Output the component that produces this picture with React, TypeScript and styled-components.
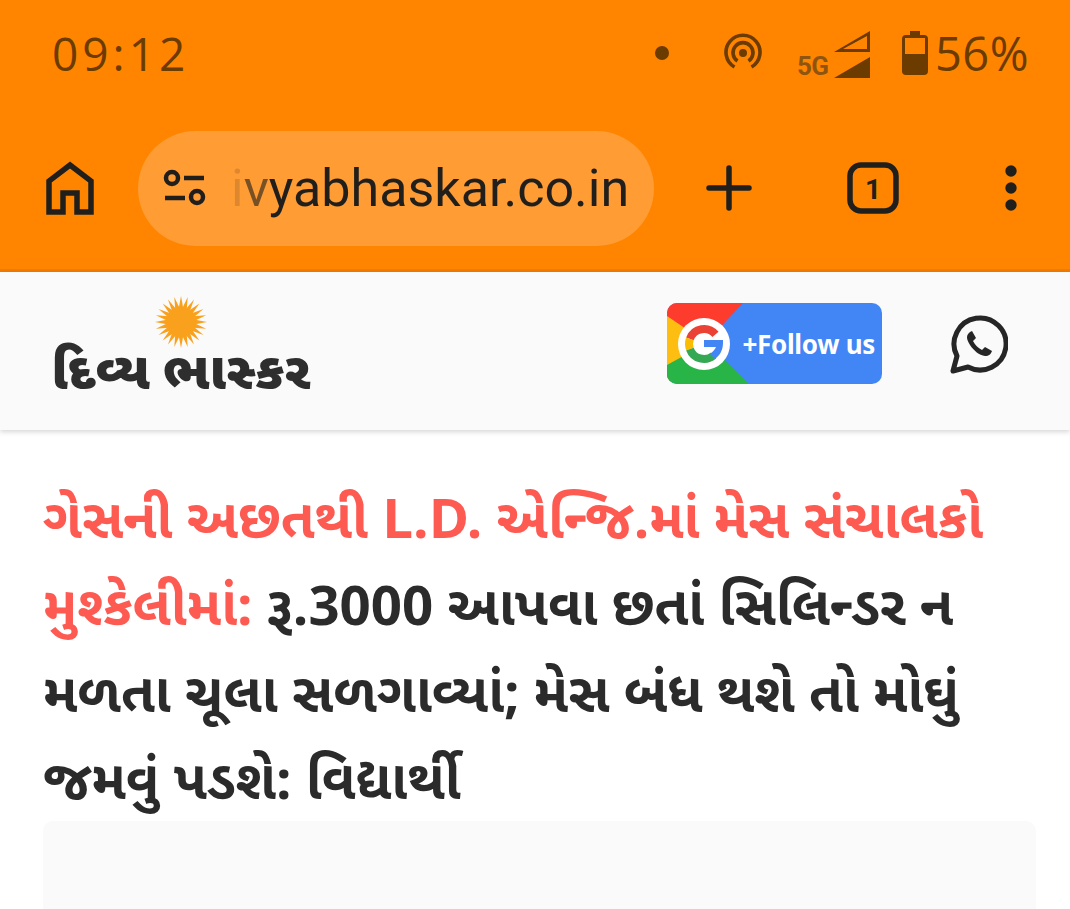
import React from 'react'
import styled, { createGlobalStyle } from 'styled-components'

const GlobalStyle = createGlobalStyle`
  html, body {
    margin: 0;
    padding: 0;
    background: #fff;
  }
`

const Page = styled.div`
  width: 1070px;
  height: 909px;
  overflow: hidden;
  background: #fff;
  font-family: "Roboto", "Noto Sans", sans-serif;
`

const Chrome = styled.div`
  height: 269px;
  background: #ff8500;
  border-bottom: 3px solid #f07c00;
  display: flex;
  flex-direction: column;
`

const StatusBar = styled.div`
  height: 106px;
  padding: 0 41px 0 52px;
  display: flex;
  align-items: center;
  color: #6b3b00;
`

const Clock = styled.span`
  font-family: "Open Sans", sans-serif;
  font-size: 46px;
  letter-spacing: 4px;
  margin-right: auto;
`

const Battery = styled.span`
  font-family: "Open Sans", sans-serif;
  font-size: 47px;
  letter-spacing: 0.5px;
`

const StatusIcon = styled.svg<{ $gap?: number }>`
  display: block;
  flex: none;
  margin-right: ${(p) => p.$gap ?? 0}px;
  fill: #6b3b00;
`

const Signal = styled.div`
  width: 74px;
  height: 52px;
  margin-right: 31px;
  flex: none;
  display: flex;
  justify-content: space-between;
  align-items: flex-end;
`

const NetworkLabel = styled.span`
  font-family: "Roboto", sans-serif;
  font-weight: 700;
  font-size: 26px;
  line-height: 24px;
  letter-spacing: -0.5px;
  margin-bottom: 1px;
  color: #8f5510;
`

const Toolbar = styled.div`
  height: 100px;
  margin-top: 32px;
  display: flex;
  align-items: center;
  padding-left: 46px;
`

const UrlPill = styled.div`
  width: 516px;
  height: 115px;
  margin-left: 44px;
  margin-right: 52px;
  flex: none;
  border-radius: 58px;
  background: #ff9c33;
  display: flex;
  align-items: center;
  padding-left: 25px;
  box-sizing: border-box;
`

const UrlText = styled.span`
  margin-left: 24px;
  font-family: "Roboto", sans-serif;
  font-size: 52px;
  color: #201f1c;
  white-space: nowrap;
`

const FadeLetter = styled.span<{ $alpha: number }>`
  opacity: ${(p) => p.$alpha};
`

const ToolIcon = styled.svg<{ $gap?: number }>`
  display: block;
  flex: none;
  margin-right: ${(p) => p.$gap ?? 0}px;
`

const SiteHeader = styled.header`
  height: 158px;
  background: #fafafa;
  box-shadow: 0 2px 5px rgba(0, 0, 0, 0.16);
  display: flex;
  align-items: center;
  padding: 0 62px 0 50px;
  position: relative;
`

const Logo = styled.div`
  width: 262px;
  margin-top: -9px;
  display: flex;
  flex-direction: column;
  align-items: center;
  margin-right: auto;
`

const LogoText = styled.div`
  margin-top: 4px;
  font-family: "Noto Sans Gujarati", "Noto Sans", sans-serif;
  font-weight: 900;
  font-size: 52px;
  line-height: 46px;
  color: #2e2e2e;
  white-space: nowrap;
`

const FollowBadge = styled.div`
  width: 215px;
  height: 81px;
  margin-right: 66px;
  margin-top: -16px;
  border-radius: 10px;
  overflow: hidden;
  background: #4285f4;
  position: relative;
  display: flex;
  align-items: center;
  justify-content: flex-end;
  padding: 2px 7px 0 0;
  box-sizing: border-box;
`

const FollowArt = styled.svg`
  position: absolute;
  left: 0;
  top: 0;
`

const FollowText = styled.span`
  position: relative;
  font-family: "Noto Sans", sans-serif;
  font-weight: 700;
  font-size: 26px;
  letter-spacing: -0.3px;
  color: #fff;
`

const WhatsApp = styled.svg`
  display: block;
  margin-top: -12px;
`

const Article = styled.main`
  padding: 51px 34px 0 43px;
`

const Headline = styled.h1`
  margin: 0;
  font-family: "Noto Sans Gujarati", "Noto Sans", "Roboto", sans-serif;
  font-size: 54.6px;
  font-weight: 700;
  line-height: 87px;
  color: #2b2b2b;
`

const Slug = styled.span`
  color: #fd5a52;
`

const AdBox = styled.div`
  margin-top: -8px;
  height: 120px;
  border-radius: 10px;
  background: #fafafa;
`

function Sun() {
  const rays = Array.from({ length: 24 }, (_, i) => i * 15)
  return (
    <svg width="54" height="54" viewBox="0 0 54 54">
      <circle cx="27" cy="27" r="14.5" fill="#f9a11d" />
      {rays.map((a) => (
        <polygon key={a} points="24.6,14 29.4,14 27,1" fill="#f9a11d" transform={`rotate(${a} 27 27)`} />
      ))}
    </svg>
  )
}

export default function App() {
  return (
    <Page>
      <GlobalStyle />
      <Chrome>
        <StatusBar>
          <Clock>09:12</Clock>
          <StatusIcon $gap={53} width="16" height="16" viewBox="0 0 16 16">
            <circle cx="8" cy="8" r="7" />
          </StatusIcon>
          <StatusIcon $gap={34} width="40" height="40" viewBox="0 0 40 40">
            <circle cx="20" cy="20" r="4" />
            <path d="M11.5 34a17 17 0 1 1 17 0" fill="none" stroke="#6b3b00" strokeWidth="3.6" />
            <path d="M14.5 28a10 10 0 1 1 11 0" fill="none" stroke="#6b3b00" strokeWidth="3.6" />
          </StatusIcon>
          <Signal>
            <NetworkLabel>5G</NetworkLabel>
            <StatusIcon width="37" height="52" viewBox="0 0 37 52">
              <path d="M0 25 36 4v21Z M9 22h24V9Z" fillRule="evenodd" />
              <path d="M0 51 36 30v21Z" />
            </StatusIcon>
          </Signal>
          <StatusIcon $gap={7} width="26" height="44" viewBox="0 0 26 44">
            <path d="M8 0h10v4h4a4 4 0 0 1 4 4v32a4 4 0 0 1-4 4H4a4 4 0 0 1-4-4V8a4 4 0 0 1 4-4h4Z M3 7v16h20V7Z" fillRule="evenodd" />
          </StatusIcon>
          <Battery>56%</Battery>
        </StatusBar>
        <Toolbar>
          <ToolIcon width="48" height="54" viewBox="0 0 48 54" fill="none" stroke="#201f1c" strokeWidth="5.5">
            <path d="M3 51V20L24 4l21 16v31H31V32H17v19Z" />
          </ToolIcon>
          <UrlPill>
            <ToolIcon width="44" height="38" viewBox="0 0 44 38" fill="none" stroke="#201f1c" strokeWidth="4.5">
              <circle cx="9" cy="9" r="6" />
              <path d="M21 9h20M2 29h20" />
              <circle cx="34" cy="28" r="6" />
            </ToolIcon>
            <UrlText>
              <FadeLetter $alpha={0.15}>i</FadeLetter>
              <FadeLetter $alpha={0.6}>v</FadeLetter>
              yabhaskar.co.in
            </UrlText>
          </UrlPill>
          <ToolIcon $gap={95} width="46" height="46" viewBox="0 0 46 46" stroke="#201f1c" strokeWidth="5.5" strokeLinecap="round">
            <path d="M3 23h40M23 3v40" />
          </ToolIcon>
          <ToolIcon $gap={106} width="52" height="52" viewBox="0 0 52 52">
            <rect x="3" y="3" width="46" height="46" rx="11" fill="none" stroke="#201f1c" strokeWidth="5.5" />
            <text x="26" y="37" textAnchor="middle" fontFamily="Roboto" fontWeight="700" fontSize="28" fill="#201f1c">1</text>
          </ToolIcon>
          <ToolIcon width="12" height="46" viewBox="0 0 12 46" fill="#201f1c">
            <circle cx="6" cy="6" r="5.7" />
            <circle cx="6" cy="23" r="5.7" />
            <circle cx="6" cy="40" r="5.7" />
          </ToolIcon>
        </Toolbar>
      </Chrome>
      <SiteHeader>
        <Logo>
          <Sun />
          <LogoText>દિવ્ય ભાસ્કર</LogoText>
        </Logo>
        <FollowBadge>
          <FollowArt width="215" height="81" viewBox="0 0 215 81">
            <path d="M0 0h76L0 81Z" fill="#fe3c2d" />
            <path d="M0 13 40 40 0 64Z" fill="#fdbd11" />
            <path d="M0 81V62l40-22 42 41Z" fill="#28b446" />
            <circle cx="37" cy="41" r="26" fill="#fff" />
            <g fill="none" strokeWidth="8">
              <path d="M48.5 31.4A15 15 0 0 0 22.9 35.9" stroke="#ea4335" />
              <path d="M22.9 35.9A15 15 0 0 0 22.9 46.1" stroke="#fbbc05" />
              <path d="M22.9 46.1A15 15 0 0 0 46.6 52.5" stroke="#34a853" />
            </g>
            <path d="M37 37h19v3c0 8-4 13-8 16l-5-5c3-2 5-5 6-7H37Z" fill="#4285f4" />
          </FollowArt>
          <FollowText>+Follow us</FollowText>
        </FollowBadge>
        <WhatsApp width="60" height="60" viewBox="0 0 60 60" fill="none">
          <path d="M5 56l4-15A26 26 0 1 1 20 52Z" stroke="#262626" strokeWidth="5" strokeLinejoin="round" />
          <path d="M22 17c-4 3-4 7 0 13s9 10 15 11c4 0 6-2 7-5l-7-4-3 3c-4-2-7-5-9-9l3-3-4-7Z" fill="#262626" />
        </WhatsApp>
      </SiteHeader>
      <Article>
        <Headline>
          <Slug>ગેસની અછતથી L.D. એન્જિ.માં મેસ સંચાલકો મુશ્કેલીમાં:</Slug> રૂ.3000 આપવા છતાં સિલિન્ડર ન મળતા ચૂલા સળગાવ્યાં; મેસ બંધ થશે તો મોઘું જમવું પડશે: વિદ્યાર્થી
        </Headline>
        <AdBox />
      </Article>
    </Page>
  )
}
